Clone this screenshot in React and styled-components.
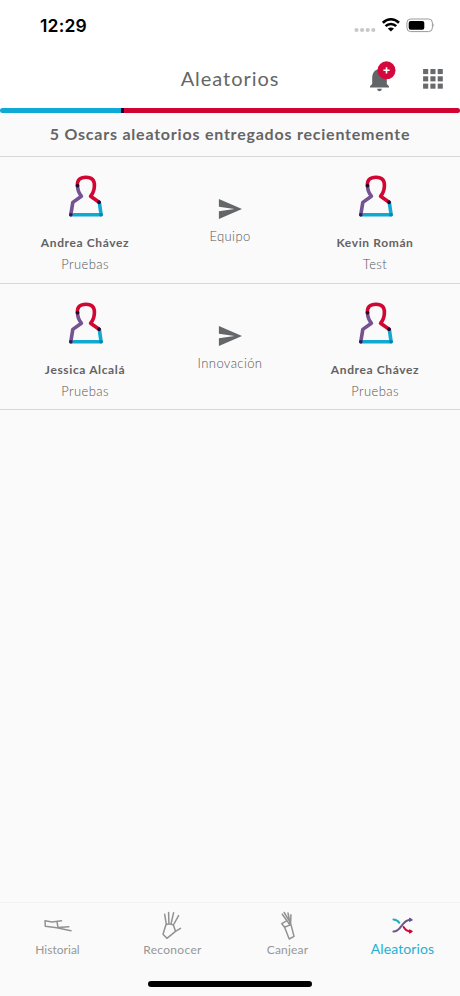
import styled, { createGlobalStyle } from "styled-components"

const entregas = [
    { de: "Andrea Chávez", areaDe: "Pruebas", valor: "Equipo", para: "Kevin Román", areaPara: "Test" },
    { de: "Jessica Alcalá", areaDe: "Pruebas", valor: "Innovación", para: "Andrea Chávez", areaPara: "Pruebas" },
]

export default function App() {
    return (
        <>
            <GlobalStyle />
            <Pantalla>
                <BarraEstado>
                    <Hora>12:29</Hora>
                    <IconosEstado />
                </BarraEstado>
                <Encabezado>
                    <h1>Aleatorios</h1>
                    <Acciones>
                        <Campana />
                        <Cuadricula />
                    </Acciones>
                </Encabezado>
                <Franja>
                    <Tramo $ancho="121px" $color="#0fa9d6" />
                    <Tramo $ancho="3px" $color="#11062d" />
                    <Tramo $color="#d00432" />
                </Franja>
                <Subtitulo>5 Oscars aleatorios entregados recientemente</Subtitulo>
                {entregas.map((e, i) => (
                    <Fila key={i}>
                        <Persona nombre={e.de} area={e.areaDe} />
                        <Valor>
                            <Flecha />
                            <Detalle>{e.valor}</Detalle>
                        </Valor>
                        <Persona nombre={e.para} area={e.areaPara} />
                    </Fila>
                ))}
                <Espacio />
                <Pestanas>
                    <Pestana $espaciado="0.02px"><Mano tipo="historial" /><span>Historial</span></Pestana>
                    <Pestana $espaciado="0.3px"><Mano tipo="reconocer" /><span>Reconocer</span></Pestana>
                    <Pestana $espaciado="0.2px"><Mano tipo="canjear" /><span>Canjear</span></Pestana>
                    <Pestana $activa><Mezcla /><span>Aleatorios</span></Pestana>
                </Pestanas>
                <ZonaInicio><Indicador /></ZonaInicio>
            </Pantalla>
        </>
    )
}

function Persona({ nombre, area }) {
    return (
        <Columna>
            <Avatar />
            <Nombre>{nombre}</Nombre>
            <Detalle>{area}</Detalle>
        </Columna>
    )
}

function Avatar() {
    return (
        <svg width="40" height="46" viewBox="0 0 40 46" fill="none" strokeWidth="3.6" strokeLinecap="round" strokeLinejoin="round">
            <path d="M5.8 41.7H36.1L34.3 29.2" stroke="#10a9d2" />
            <path d="M5.8 41.7L7.8 29.4L16.4 23.2Q12.6 18.6 12.5 12.8" stroke="#735391" />
            <path d="M12.5 12.8C12 6.8 15 4.2 21 4.2S29.8 7.2 29.4 13.2C29.2 17.8 27.8 20.8 25.6 23.2L34.1 29.2" stroke="#d00633" />
            <path d="M12.5 12.6v.2M34 29.2l.1.1" stroke="#1e0b2e" strokeWidth="3.5" />
            <path d="M5.8 41.7v.1" stroke="#2b1f5a" strokeWidth="3.5" />
            <path d="M36 41.7h.1" stroke="#0083ad" strokeWidth="3.5" />
        </svg>
    )
}

function Flecha() {
    return (
        <svg width="24" height="20" viewBox="0 0 24 20">
            <path d="M.9 0L24 10L.9 20V12.3L16.5 10L.9 7.7Z" fill="#646769" />
        </svg>
    )
}

function IconosEstado() {
    return (
        <svg width="84" height="18" viewBox="0 0 84 18">
            <g fill="#c8c8c8">
                <circle cx="4.5" cy="14" r="2.1" />
                <circle cx="10.1" cy="14" r="2.1" />
                <circle cx="15.7" cy="14" r="2.1" />
                <circle cx="21.3" cy="14" r="2.1" />
            </g>
            <g fill="none" stroke="#000" strokeWidth="2.6">
                <path d="M30.8 6.8C35.6 2.1 42.2 2.1 47 6.8" />
                <path d="M33.6 10.2C36.5 7.3 41.3 7.3 44.2 10.2" />
            </g>
            <path d="M35.8 12.6Q38.9 10.2 42 12.6L38.9 15.6Z" />
            <rect x="54.9" y="3" width="25.5" height="12.6" rx="3.8" fill="none" stroke="#999" />
            <rect x="56.7" y="4.9" width="15.6" height="8.8" rx="2" />
            <path d="M81.5 7.2v4Q83.3 9.2 81.5 7.2Z" fill="#999" />
        </svg>
    )
}

function Campana() {
    return (
        <svg width="28" height="32" viewBox="0 0 28 32">
            <path d="M1 26.4v-1.2l2.2-2.2v-6.2C3.2 12 5.8 9.1 9 8.3V7.6a1.8 1.8 0 0 1 3.6 0v.7c3.3.8 5.2 3.7 5.2 8.5V23l2.2 2.2v1.2ZM8.1 27.8h4.8a2.4 2.4 0 0 1-4.8 0Z" fill="#626568" />
            <circle cx="17.5" cy="9.3" r="9" fill="#d4083c" />
            <path d="M14.4 9.3h6.2M17.5 6.2v6.2" stroke="#fff" strokeWidth="1.6" />
        </svg>
    )
}

function Cuadricula() {
    return (
        <svg width="20" height="20" viewBox="0 0 20 20" fill="#68696b">
            {[0, 7.3, 14.6].map((y) => [0, 7.3, 14.6].map((x) => (
                <rect key={x + "-" + y} x={x + 0.1} y={y} width="5.1" height="5.1" />
            )))}
        </svg>
    )
}

const trazos = {
    historial: "M2 10.8L9 11.9L18.5 10.8M2 10.8L2.3 16.3L13.8 17.7L28 20.7M14 11.6L15 17.5L25.8 16.8",
    reconocer: "M8.3 14.5L6.7 4.3M10.9 14L10.6 2.4M13 14L15.6 2.7M15.4 15L20.6 5.6M8 14.5Q12 13.5 15.4 15L17.5 21.3L8.9 28.3L5 24.2ZM17.5 21.3L22.5 18.3",
    canjear: "M11.4 17.2L18 14.6L21 26.4L16.2 29L11.8 17.8M11.4 17L8.8 13.7L14 10.7L16.8 15M14 11L9.3 4.2M15.7 10L11.2 2.5M17.1 14L15 2.9M17.6 14.2L17.9 4.7",
}

function Mano({ tipo }) {
    return (
        <svg width="30" height="30" viewBox="0 0 30 30" fill="none" stroke="#929292" strokeWidth="1.5" strokeLinecap="round" strokeLinejoin="round">
            <path d={trazos[tipo]} />
        </svg>
    )
}

function Mezcla() {
    return (
        <svg width="30" height="30" viewBox="0 0 30 30" fill="none" strokeWidth="2" strokeLinecap="round" strokeLinejoin="round">
            <path d="M5.4 9.6C8.2 9.6 9.8 10.8 11.4 12.8" stroke="#20aebf" />
            <path d="M5.4 21.5C14 21.5 13.2 9.8 22.6 9.8" stroke="#6c558c" />
            <path d="M21.6 8.4L24 9.8L21.6 11.2Z" fill="#6c558c" stroke="#6c558c" strokeWidth="1.4" />
            <path d="M15.6 17C17.4 20 19.3 21.4 22.6 21.4" stroke="#d00639" />
            <path d="M21.6 20L24 21.4L21.6 22.8Z" fill="#d00639" stroke="#d00639" strokeWidth="1.4" />
        </svg>
    )
}

const GlobalStyle = createGlobalStyle`
    * {
        box-sizing: border-box;
    }
    body {
        margin: 0;
        background: #fafafa;
        font-family: Lato, "Open Sans", sans-serif;
    }
    svg {
        display: block;
        flex-shrink: 0;
    }
`

const Pantalla = styled.div`
    width: 460px;
    height: 996px;
    display: flex;
    flex-direction: column;
    background: #fafafa;
    overflow: hidden;
`

const BarraEstado = styled.div`
    height: 50px;
    padding: 16px 24px 0 40px;
    display: flex;
    justify-content: space-between;
    background: #fff;
`

const Hora = styled.span`
    font-family: Inter, sans-serif;
    font-size: 17.5px;
    line-height: 20px;
    font-weight: 600;
    letter-spacing: 0.2px;
    color: #000;
`

const Encabezado = styled.header`
    height: 58px;
    display: grid;
    grid-template-columns: 1fr auto 1fr;
    align-items: center;
    background: #fff;

    h1 {
        grid-column: 2;
        margin: 0 0 2px;
        font-size: 20px;
        line-height: 24px;
        font-weight: 400;
        letter-spacing: 0.95px;
        color: #666;
    }
`

const Acciones = styled.div`
    display: flex;
    align-items: center;
    justify-content: flex-end;
    gap: 26px;
    padding-right: 17px;

    svg:first-child {
        margin-top: -4px;
    }
`

const Franja = styled.div`
    height: 5px;
    flex-shrink: 0;
    display: flex;
    overflow: hidden;
    border-radius: 3px;
`

const Tramo = styled.div`
    width: ${(props) => props.$ancho || "auto"};
    flex: ${(props) => props.$ancho ? "none" : "1"};
    background: ${(props) => props.$color};
`

const Subtitulo = styled.h2`
    height: 44px;
    margin: 0;
    padding-bottom: 2px;
    display: flex;
    align-items: center;
    justify-content: center;
    border-bottom: 1px solid #d8d8d8;
    font-size: 16px;
    font-weight: 700;
    letter-spacing: 0.78px;
    white-space: nowrap;
    color: #656565;
`

const Fila = styled.section`
    height: 126.5px;
    display: grid;
    grid-template-columns: 170px 120px 170px;
    border-bottom: 1px solid #d8d8d8;
`

const Columna = styled.div`
    display: flex;
    flex-direction: column;
    align-items: center;
    padding-top: 16px;
`

const Valor = styled(Columna)`
    padding-top: 42px;

    svg {
        margin-bottom: 7px;
    }
`

const Nombre = styled.p`
    margin: 14px 0 1px;
    font-size: 12px;
    line-height: 20px;
    font-weight: 700;
    letter-spacing: 0.62px;
    color: #636363;
`

const Detalle = styled.p`
    margin: 0;
    font-size: 13px;
    line-height: 21px;
    font-weight: 300;
    letter-spacing: 0.4px;
    color: #555;
`

const Espacio = styled.div`
    flex: 1;
`

const Pestanas = styled.nav`
    height: 62px;
    display: grid;
    grid-template-columns: repeat(4, 1fr);
    border-top: 1px solid #f2f2f2;
`

const Pestana = styled.div`
    display: flex;
    flex-direction: column;
    align-items: center;
    padding-top: 7px;
    font-size: ${(props) => props.$activa ? "14px" : "12px"};
    line-height: ${(props) => props.$activa ? "18px" : "20px"};
    letter-spacing: ${(props) => props.$espaciado || "0.1px"};
    color: ${(props) => props.$activa ? "#25b0d2" : "#979797"};
`

const ZonaInicio = styled.div`
    height: 32px;
    padding-top: 17px;
    display: flex;
    justify-content: center;
`

const Indicador = styled.div`
    width: 164px;
    height: 6px;
    border-radius: 3px;
    background: #000;
`
